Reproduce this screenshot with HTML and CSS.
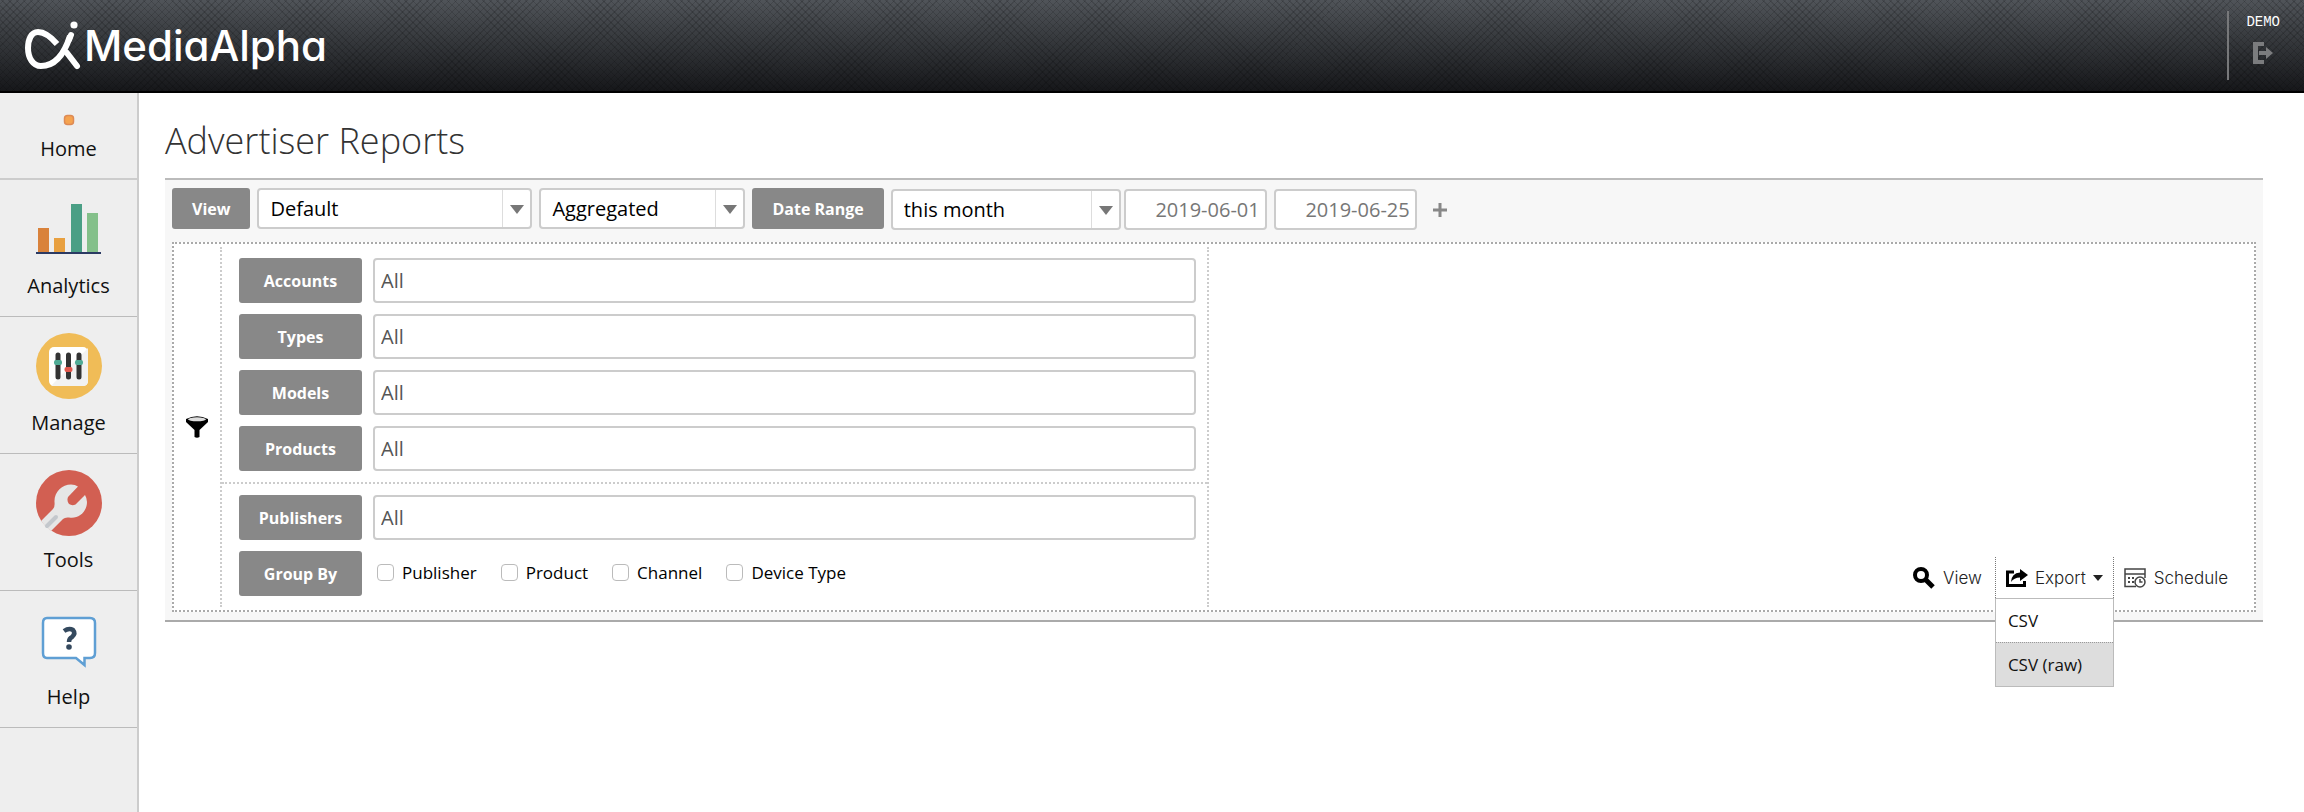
FILE: index.html
```html
<!DOCTYPE html>
<html lang="en">
<head>
    <meta charset="UTF-8">
    <meta name="viewport" content="width=device-width, initial-scale=1.0">
    <title>Advertiser Reports</title>
    <link rel="stylesheet" href="styles.css">
</head>
<body>
    <header class="topbar">
        <a class="logo" href="#">
            <svg width="58" height="50" viewBox="0 0 58 50" fill="none" stroke="#fff" stroke-width="6" stroke-linecap="round">
                <path d="M33 23C27 16 20 11 14 11C7 11 4 19 4 27C4 37 9 45 17 45C30 45 40 34 46 15" stroke-linecap="butt"/>
                <path d="M45 19L47 14"/>
                <path d="M43 32L53 45"/>
                <circle cx="50" cy="4" r="3.6" fill="#fff" stroke="none"/>
            </svg>
            <span>MediaAlpha</span>
        </a>
        <div class="account">
            <span>DEMO</span>
            <a href="#" aria-label="Log out">
                <svg width="20" height="22" viewBox="0 0 20 22" fill="#7b7c7e">
                    <path d="M0 0H11V4H5V18H11V22H0Z"/>
                    <path d="M6 9H13V5L20 11L13 17V13H6Z"/>
                </svg>
            </a>
        </div>
    </header>

    <div class="page">
        <nav class="sidebar">
            <a class="nav-item nav-home" href="#">
                <svg width="12" height="12" viewBox="0 0 12 12">
                    <rect x="1.5" y="1.5" width="9" height="9" rx="3" fill="#f5a34f" stroke="#dd8a55" stroke-width="1.5"/>
                </svg>
                <span>Home</span>
            </a>
            <a class="nav-item" href="#">
                <svg width="66" height="66" viewBox="0 0 66 66">
                    <path fill="#d9823b" d="M2 32H13V57H2Z"/>
                    <path fill="#e8a040" d="M18 42H29V57H18Z"/>
                    <path fill="#4a9f85" d="M35 8H46V57H35Z"/>
                    <path fill="#84c08a" d="M51 17H62V57H51Z"/>
                    <path fill="#2b3a63" d="M0 56H65V58H0Z"/>
                </svg>
                <span>Analytics</span>
            </a>
            <a class="nav-item" href="#">
                <svg width="66" height="66" viewBox="0 0 66 66">
                    <circle cx="33" cy="33" r="33" fill="#f0bc57"/>
                    <rect x="13" y="14" width="39" height="39" rx="5" fill="#fff"/>
                    <path d="M52 15V48Q52 53 47 53H15Z" fill="#f2f2f2"/>
                    <g stroke="#333" stroke-width="5" stroke-linecap="round">
                        <path d="M22 22V44M32.500 22V44M43 22V44"/>
                    </g>
                    <rect x="18" y="27" width="8" height="5" rx="2" fill="#4fab95"/>
                    <rect x="28.500" y="34" width="8" height="5" rx="2" fill="#e2574c"/>
                    <rect x="39" y="27" width="8" height="5" rx="2" fill="#4fab95"/>
                </svg>
                <span>Manage</span>
            </a>
            <a class="nav-item" href="#">
                <svg width="66" height="66" viewBox="0 0 66 66">
                    <circle cx="33" cy="33" r="33" fill="#d25f52"/>
                    <path fill="#e6e6e6" d="M5 51L17 39Q19 37 18.500 32C18 22 26 14.500 35 14.500Q39 14.500 42 16.500L32 27Q30.500 31 33 34Q36 36 39.500 34.500L49 25Q52 30 50.500 36C48.500 44 41 49 33 47.500Q29 47 27 49L15 61Q9 57 5 51Z"/>
                    <path d="M11 56L20 47" stroke="#c3c7cc" stroke-width="4" stroke-linecap="round"/>
                </svg>
                <span>Tools</span>
            </a>
            <a class="nav-item" href="#">
                <svg width="66" height="66" viewBox="0 0 66 66">
                    <path fill="#fff" stroke="#5f9fd4" stroke-width="2.500" d="M11 11H54Q59 11 59 16V46Q59 51 54 51H48.500V58L40 51H11Q7 51 7 46V16Q7 11 11 11Z"/>
                    <path d="M28 24Q33 20.500 37 23Q40 26.500 36 30Q33 31.500 33 35" fill="none" stroke="#34495e" stroke-width="4.500"/>
                    <circle cx="33" cy="40" r="2.800" fill="#34495e"/>
                </svg>
                <span>Help</span>
            </a>
        </nav>

        <main class="content">
            <h1>Advertiser Reports</h1>

            <form class="report" action="#" method="get">
                <div class="toolbar">
                    <label class="tag" for="view">View</label>
                    <div class="select select-view">
                        <select id="view">
                            <option>Default</option>
                        </select>
                    </div>
                    <div class="select select-mode">
                        <select aria-label="Mode">
                            <option>Aggregated</option>
                        </select>
                    </div>
                    <label class="tag" for="range">Date Range</label>
                    <div class="dates">
                        <div class="select select-range">
                            <select id="range">
                                <option>this month</option>
                            </select>
                        </div>
                        <input class="date" type="text" aria-label="Start date" value="2019-06-01">
                        <input class="date" type="text" aria-label="End date" value="2019-06-25">
                        <button class="add" type="button" aria-label="Add date range">
                            <svg width="14" height="14" viewBox="0 0 14 14" stroke="#888" stroke-width="3">
                                <path d="M7 0V14M0 7H14"/>
                            </svg>
                        </button>
                    </div>
                </div>

                <div class="panel">
                    <div class="funnel">
                        <svg width="22" height="22" viewBox="0 0 22 22">
                            <path d="M0 3Q11 -2.500 22 3V6L13.500 14V21Q11 22.500 8.500 21V14L0 6Z"/>
                            <ellipse cx="11" cy="3.300" rx="9" ry="2" fill="#ddd"/>
                        </svg>
                    </div>
                    <div class="filters">
                        <div class="group">
                            <div class="row">
                                <label class="tag" for="accounts">Accounts</label>
                                <input type="text" id="accounts" value="All">
                            </div>
                            <div class="row">
                                <label class="tag" for="types">Types</label>
                                <input type="text" id="types" value="All">
                            </div>
                            <div class="row">
                                <label class="tag" for="models">Models</label>
                                <input type="text" id="models" value="All">
                            </div>
                            <div class="row">
                                <label class="tag" for="products">Products</label>
                                <input type="text" id="products" value="All">
                            </div>
                        </div>
                        <div class="group">
                            <div class="row">
                                <label class="tag" for="publishers">Publishers</label>
                                <input type="text" id="publishers" value="All">
                            </div>
                            <div class="row">
                                <span class="tag" id="group-by">Group By</span>
                                <div class="checks" role="group" aria-labelledby="group-by">
                                    <label><input type="checkbox">Publisher</label>
                                    <label><input type="checkbox">Product</label>
                                    <label><input type="checkbox">Channel</label>
                                    <label><input type="checkbox">Device Type</label>
                                </div>
                            </div>
                        </div>
                    </div>

                    <div class="actions">
                        <button class="action" type="button">
                            <svg width="22" height="22" viewBox="0 0 22 22" fill="none" stroke="#000">
                                <circle cx="8" cy="8" r="6" stroke-width="4"/>
                                <path d="M13 13L20 20" stroke-width="5"/>
                            </svg>
                            View
                        </button>
                        <div class="export">
                            <button class="action" type="button">
                                <svg width="22" height="18" viewBox="0 0 22 18">
                                    <path d="M8 3H1.500V16.500H18.500V12" fill="none" stroke="#000" stroke-width="3"/>
                                    <path d="M14 0L22 6L14 12V8.500Q8 8.500 5 13Q5.500 4 14 3.500Z"/>
                                </svg>
                                Export
                                <span class="caret"></span>
                            </button>
                            <ul class="menu">
                                <li><a href="#">CSV</a></li>
                                <li class="active"><a href="#">CSV (raw)</a></li>
                            </ul>
                        </div>
                        <button class="action" type="button">
                            <svg width="22" height="20" viewBox="0 0 22 20" fill="none" stroke="#444" stroke-width="1.500">
                                <path d="M12 18.500H1V1H21V10M1 6H21"/>
                                <path d="M4 10H6M8 10H10M4 14H6M8 14H10M13 10H14" stroke-width="2"/>
                                <circle cx="16" cy="14" r="5" fill="#fff"/>
                                <path d="M16 11V14H18.500"/>
                            </svg>
                            Schedule
                        </button>
                    </div>
                </div>
            </form>
        </main>
    </div>
</body>
</html>
```
FILE: styles.css
```css
* {
    box-sizing: border-box;
}

body {
    font-family: "Open Sans", "Noto Sans", sans-serif;
    font-size: 20px;
    color: #111;
    background-color: #fff;
    margin: 0;
    min-height: 100vh;
    display: flex;
    flex-direction: column;
}

a {
    color: inherit;
    text-decoration: none;
}

svg {
    display: block;
    flex: none;
}

button, input, select {
    font: inherit;
    color: inherit;
    margin: 0;
}

/* header */
.topbar {
    display: flex;
    justify-content: space-between;
    align-items: center;
    height: 93px;
    padding: 0 24px;
    border-bottom: 2px solid #000;
    background:
        repeating-linear-gradient(45deg, rgba(0, 0, 0, 0.14) 0 1px, transparent 1px 5px),
        repeating-linear-gradient(-45deg, rgba(0, 0, 0, 0.14) 0 1px, transparent 1px 5px),
        linear-gradient(#505459, #383b3f 40%, #16171a);
}

.logo {
    display: flex;
    align-items: center;
    gap: 2px;
    color: #fff;
    font-family: Inter, sans-serif;
    font-size: 42px;
    font-weight: 500;
    font-feature-settings: "cv11";
    line-height: 52px;
}

.account {
    display: flex;
    flex-direction: column;
    align-items: center;
    gap: 12px;
    height: 69px;
    padding: 3px 0 0 17px;
    border-left: 2px solid #77787a;
    color: #fff;
    font-family: "Liberation Mono", monospace;
    font-size: 14px;
    line-height: 16px;
}

.page {
    display: flex;
    flex: 1;
}

/* left navigation */
.sidebar {
    flex: 0 0 139px;
    border-right: 2px solid #ccc;
    background-color: #eee;
}

.nav-item {
    display: flex;
    flex-direction: column;
    align-items: center;
    gap: 10px;
    padding: 16px 0;
    border-bottom: 1px solid #bbb;
    line-height: 28px;
}

.nav-home {
    gap: 9px;
    padding: 21px 0 15px;
    border-bottom: 2px solid #ccc;
}

/* report form */
.content {
    flex: 1;
    padding: 22px 41px 40px 26px;
}

h1 {
    margin: 0 0 11px;
    color: #333;
    font-size: 36px;
    font-weight: 300;
    line-height: 52px;
}

.report {
    padding: 8px 7px;
    border-top: 2px solid #bbb;
    border-bottom: 2px solid #aaa;
    background-color: #f7f7f7;
}

.toolbar {
    display: flex;
    align-items: flex-start;
    gap: 7px;
    margin-bottom: 12px;
}

.tag {
    display: flex;
    align-items: center;
    justify-content: center;
    height: 41px;
    padding: 0 20px;
    border-radius: 3px;
    background-color: #888;
    color: #fff;
    font-size: 16px;
    font-weight: bold;
}

.select {
    position: relative;
    height: 41px;
}

.select select {
    appearance: none;
    width: 100%;
    height: 100%;
    padding: 0 40px 0 11px;
    border: 2px solid #ccc;
    border-radius: 4px;
    background: linear-gradient(#ddd, #ddd) right 27px top / 1px 100% no-repeat #fff;
    color: #000;
}

.select::after {
    content: "";
    position: absolute;
    top: 17px;
    right: 8px;
    border: 7px solid transparent;
    border-top: 9px solid #777;
    border-bottom: 0;
    pointer-events: none;
}

.select-view {
    width: 275px;
}

.select-mode {
    width: 206px;
}

.select-range {
    width: 230px;
}

.dates {
    display: flex;
    gap: 7px;
    padding-top: 1px;
}

.select-range + .date {
    margin-left: -4px;
}

.date {
    width: 143px;
    height: 41px;
    padding: 0 5px;
    border: 2px solid #ccc;
    border-radius: 4px;
    background-color: #fff;
    color: #777;
    text-align: right;
}

.add {
    padding: 0 9px;
    border: 0;
    background: none;
}

.panel {
    display: flex;
    padding: 3px 0;
    border: 2px dotted #aaa;
    background-color: #fff;
}

.funnel {
    display: flex;
    align-items: center;
    justify-content: center;
    flex: 0 0 46px;
}

.filters {
    flex: 0 1 989px;
    border: 2px dotted #ccc;
    border-width: 0 2px;
}

.group {
    display: flex;
    flex-direction: column;
    gap: 11px;
    padding: 11px 11px 11px 17px;
}

.group + .group {
    border-top: 2px dotted #ccc;
}

.row {
    display: flex;
    gap: 11px;
    height: 45px;
}

.row .tag {
    flex: 0 0 123px;
    height: 100%;
    padding: 0;
}

.row input[type="text"] {
    flex: 1;
    min-width: 0;
    padding: 0 6px;
    border: 2px solid #ccc;
    border-radius: 4px;
    background-color: #fff;
    color: #555;
}

.checks {
    display: flex;
    align-items: center;
    gap: 24px;
    padding: 0 4px 2px;
    color: #000;
    font-size: 17px;
}

.checks label {
    display: flex;
    align-items: center;
    gap: 8px;
}

.checks input {
    appearance: none;
    width: 17px;
    height: 17px;
    border: 1px solid #bbb;
    border-radius: 4px;
    background-color: #fff;
}

.checks input:checked {
    background-color: #888;
}

/* actions in the bottom right corner */
.actions {
    display: flex;
    align-self: flex-end;
    margin: 0 16px 9px auto;
}

.action {
    display: flex;
    align-items: center;
    gap: 8px;
    height: 41px;
    padding: 0 10px;
    border: 0;
    background: none;
    color: #222;
    font-family: Inter, sans-serif;
    font-size: 17px;
    font-weight: 300;
}

.export {
    position: relative;
    margin: 0 0 0 3px;
    border: 1px dotted #777;
    border-width: 0 1px;
}

.export .action {
    gap: 7px;
}

.caret {
    border: 5px solid transparent;
    border-top: 6px solid #222;
    border-bottom: 0;
}

.menu {
    position: absolute;
    top: 100%;
    left: -1px;
    right: -1px;
    z-index: 1;
    margin: 0;
    padding: 0;
    border: 1px solid #bbb;
    background-color: #fff;
    color: #111;
    font-size: 17px;
    line-height: 43px;
    list-style: none;
}

.menu a {
    display: block;
    padding: 0 12px;
}

.menu .active {
    border-top: 1px dotted #999;
    background-color: #ddd;
}
```
